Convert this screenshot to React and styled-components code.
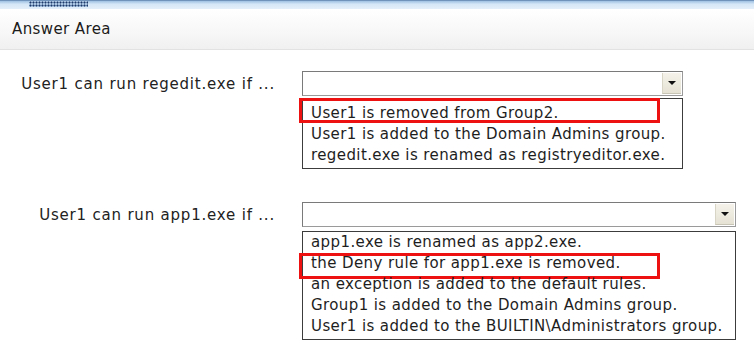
import React from 'react';
import styled, { createGlobalStyle } from 'styled-components';

const GlobalStyle = createGlobalStyle`
    body {
        margin: 0;
        background: #ffffff;
        font-family: "DejaVu Sans", Verdana, sans-serif;
        color: #1a1a1a;
    }
`;

const Page = styled.div`
    width: 754px;
    height: 341px;
    overflow: hidden;
    background: #ffffff;
`;

const TopStrip = styled.div`
    height: 9px;
    background: linear-gradient(#9fc1e3, #d6e7f7 40%, #e4effa);
    border-top: 1px solid #6f93bb;
    box-sizing: border-box;
    padding-left: 29px;
`;

const DottedTab = styled.div`
    width: 59px;
    height: 6px;
    background-image: radial-gradient(circle, #1d3a6b 0.9px, transparent 1.1px);
    background-size: 3px 3px;
    background-color: #a9c4e0;
`;

const Header = styled.div`
    height: 40px;
    display: flex;
    align-items: center;
    padding-left: 12px;
    font-size: 15px;
    letter-spacing: 0.4px;
    color: #1c1c1c;
    background: linear-gradient(#ffffff, #f7f7f7 60%, #f0f0f0);
    border-bottom: 1px solid #e2e2e2;
`;

const Body = styled.div`
    padding-top: 21px;
    display: flex;
    flex-direction: column;
    gap: 33px;
`;

const Question = styled.div`
    display: grid;
    grid-template-columns: 275px ${p => p.$width}px;
    column-gap: 27px;
    align-items: start;
`;

const Label = styled.div`
    text-align: right;
    font-size: 15px;
    letter-spacing: 0.8px;
    line-height: 25px;
    margin-top: ${p => p.$offset || 0}px;
    color: #222222;
    white-space: nowrap;
`;

const Field = styled.div`
    display: flex;
    flex-direction: column;
    gap: ${p => p.$gap}px;
`;

const SelectBox = styled.div`
    height: 25px;
    box-sizing: border-box;
    border: 1px solid #9a9a9a;
    border-top-color: #7a7a7a;
    border-left-color: #7a7a7a;
    background: #ffffff;
    display: flex;
    justify-content: flex-end;
    padding: 1px;
`;

const ArrowButton = styled.div`
    width: 18px;
    display: flex;
    align-items: center;
    justify-content: center;
    background: linear-gradient(#f4f2ea, #e6e2d4);
    border-left: 1px solid #d8d4c6;
    border-bottom: 1px solid #c9c5b6;
`;

const Arrow = styled.div`
    width: 0;
    height: 0;
    border-left: 4px solid transparent;
    border-right: 4px solid transparent;
    border-top: 4px solid #111111;
`;

const OptionList = styled.div`
    border: 1px solid #3c3c3c;
    padding: ${p => p.$pad}px 0 2px;
    background: #ffffff;
`;

const Option = styled.div`
    position: relative;
    font-size: 15px;
    letter-spacing: 0.4px;
    line-height: 21px;
    padding-left: 8px;
    white-space: nowrap;
    color: #1e1e1e;

    ${p => p.$marked && `
        &::after {
            content: '';
            position: absolute;
            left: -4px;
            top: ${p.$boxTop}px;
            width: 355px;
            height: ${p.$boxHeight}px;
            border: 3px solid #ee1111;
        }
    `}
`;

const questions = [
    {
        label: 'User1 can run regedit.exe if ...',
        width: 381,
        gap: 2,
        pad: 4,
        boxTop: -5,
        boxHeight: 19,
        options: [
            { text: 'User1 is removed from Group2.', marked: true },
            { text: 'User1 is added to the Domain Admins group.' },
            { text: 'regedit.exe is renamed as registryeditor.exe.' },
        ],
    },
    {
        label: 'User1 can run app1.exe if ...',
        width: 434,
        gap: 4,
        pad: 0,
        boxTop: 0,
        boxHeight: 20,
        options: [
            { text: 'app1.exe is renamed as app2.exe.' },
            { text: 'the Deny rule for app1.exe is removed.', marked: true },
            { text: 'an exception is added to the default rules.' },
            { text: 'Group1 is added to the Domain Admins group.' },
            { text: 'User1 is added to the BUILTIN\\Administrators group.' },
        ],
    },
];

export default function App() {
    return (
        <Page>
            <GlobalStyle />
            <TopStrip>
                <DottedTab />
            </TopStrip>
            <Header>Answer Area</Header>
            <Body>
                {questions.map(q => (
                    <Question key={q.label} $width={q.width}>
                        <Label $offset={1}>{q.label}</Label>
                        <Field $gap={q.gap}>
                            <SelectBox>
                                <ArrowButton>
                                    <Arrow />
                                </ArrowButton>
                            </SelectBox>
                            <OptionList $pad={q.pad}>
                                {q.options.map(o => (
                                    <Option
                                        key={o.text}
                                        $marked={o.marked}
                                        $boxTop={q.boxTop}
                                        $boxHeight={q.boxHeight}
                                    >
                                        {o.text}
                                    </Option>
                                ))}
                            </OptionList>
                        </Field>
                    </Question>
                ))}
            </Body>
        </Page>
    );
}
